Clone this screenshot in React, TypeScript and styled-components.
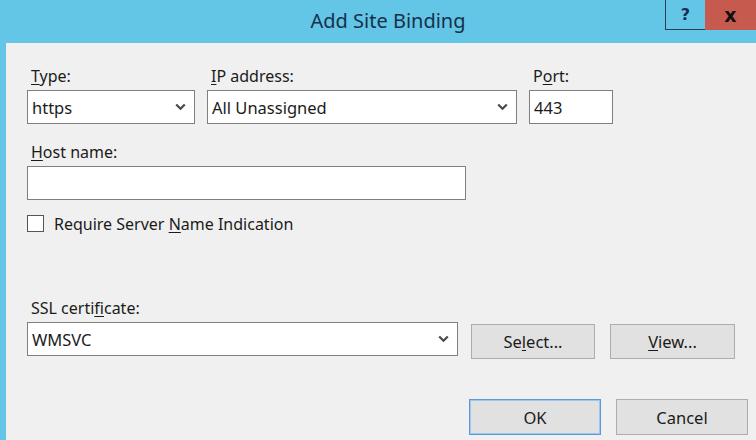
import React from 'react';
import styled, { createGlobalStyle } from 'styled-components';

const GlobalStyle = createGlobalStyle`
  html, body {
    margin: 0;
    padding: 0;
    background: #63c6e7;
  }
  * {
    box-sizing: border-box;
  }
`;

const Window = styled.div`
  display: flex;
  flex-direction: column;
  width: 756px;
  height: 440px;
  overflow: hidden;
  background: #63c6e7;
  font-family: 'Noto Sans', 'Open Sans', sans-serif;
  color: #1b1b1b;
`;

const TitleBar = styled.div`
  display: grid;
  grid-template-columns: 91px 1fr 91px;
  height: 43px;
  flex-shrink: 0;
`;

const Title = styled.div`
  grid-column: 2;
  padding: 7px 0 0 20px;
  text-align: center;
  font-size: 20px;
  color: #17304a;
`;

const Controls = styled.div`
  display: flex;
  align-items: flex-start;
`;

const CaptionButton = styled.div<{ $close?: boolean }>`
  display: flex;
  align-items: center;
  justify-content: center;
  height: 30px;
  width: ${(p) => (p.$close ? '51px' : '40px')};
  background: ${(p) => (p.$close ? '#c75a4e' : '#63c6e7')};
  border-left: ${(p) => (p.$close ? 'none' : '1px solid #2d3e4e')};
  border-bottom: ${(p) => (p.$close ? 'none' : '1px solid #2d3e4e')};
  font-family: 'DejaVu Sans', sans-serif;
  font-weight: bold;
  font-size: ${(p) => (p.$close ? '19px' : '16px')};
  color: ${(p) => (p.$close ? '#111' : '#1a2d55')};
`;

const Body = styled.div`
  flex: 1;
  margin-left: 6px;
  background: #f0f0f0;
  padding: 23px 8px 0 21px;
  display: flex;
  flex-direction: column;
  font-size: 16px;
`;

const Row = styled.div<{ $gap?: number; $top?: number; $justify?: string }>`
  display: flex;
  align-items: flex-start;
  gap: ${(p) => p.$gap ?? 12}px;
  margin-top: ${(p) => p.$top ?? 0}px;
  justify-content: ${(p) => p.$justify ?? 'flex-start'};
`;

const Field = styled.div<{ $width: number; $top?: number }>`
  display: flex;
  flex-direction: column;
  width: ${(p) => p.$width}px;
  margin-top: ${(p) => p.$top ?? 0}px;
`;

const Label = styled.div`
  height: 20px;
  line-height: 20px;
  padding-left: 4px;
  margin-bottom: 4px;
  white-space: nowrap;
`;

const Key = styled.span`
  text-decoration: underline;
  text-underline-offset: 2px;
`;

const Box = styled.div`
  display: flex;
  align-items: center;
  height: 34px;
  background: #ffffff;
  border: 1px solid #7f7f7f;
  padding: 0 8px 0 4px;
  font-size: 16.5px;
`;

const BoxText = styled.span`
  flex: 1;
`;

const Chevron = () => (
  <svg width="11" height="8" viewBox="0 0 11 8">
    <polyline points="1.2,1.5 5.5,5.8 9.8,1.5" fill="none" stroke="#4a4a4a" strokeWidth="2.2" />
  </svg>
);

const CheckRow = styled.div`
  display: flex;
  align-items: center;
  gap: 10px;
  margin-top: 15px;
  height: 17px;
`;

const CheckBox = styled.div`
  width: 17px;
  height: 17px;
  background: #ffffff;
  border: 1px solid #555555;
`;

const Button = styled.div<{ $width: number; $height?: number; $default?: boolean }>`
  display: flex;
  align-items: center;
  justify-content: center;
  width: ${(p) => p.$width}px;
  height: ${(p) => p.$height ?? 35}px;
  background: #e1e1e1;
  border: 1px solid ${(p) => (p.$default ? '#5b9bd5' : '#adadad')};
  box-shadow: ${(p) => (p.$default ? 'inset 0 0 0 1px #9fc7ec' : 'none')};
  font-size: 16.5px;
`;

export default function App() {
  return (
    <Window>
      <GlobalStyle />
      <TitleBar>
        <Title>Add Site Binding</Title>
        <Controls>
          <CaptionButton>?</CaptionButton>
          <CaptionButton $close>x</CaptionButton>
        </Controls>
      </TitleBar>
      <Body>
        <Row $gap={12}>
          <Field $width={168}>
            <Label>
              <Key>T</Key>ype:
            </Label>
            <Box>
              <BoxText>https</BoxText>
              <Chevron />
            </Box>
          </Field>
          <Field $width={310}>
            <Label>
              <Key>I</Key>P address:
            </Label>
            <Box>
              <BoxText>All Unassigned</BoxText>
              <Chevron />
            </Box>
          </Field>
          <Field $width={84}>
            <Label>
              P<Key>o</Key>rt:
            </Label>
            <Box>
              <BoxText>443</BoxText>
            </Box>
          </Field>
        </Row>
        <Field $width={439} $top={18}>
          <Label>
            <Key>H</Key>ost name:
          </Label>
          <Box />
        </Field>
        <CheckRow>
          <CheckBox />
          <span>
            Require Server <Key>N</Key>ame Indication
          </span>
        </CheckRow>
        <Row $gap={13} $top={66}>
          <Field $width={431}>
            <Label>
              SSL certi<Key>f</Key>icate:
            </Label>
            <Box>
              <BoxText>WMSVC</BoxText>
              <Chevron />
            </Box>
          </Field>
          <Row $gap={15} $top={26}>
            <Button $width={124}>
              Se<Key>l</Key>ect...
            </Button>
            <Button $width={125}>
              <Key>V</Key>iew...
            </Button>
          </Row>
        </Row>
        <Row $gap={15} $top={40} $justify="flex-end">
          <Button $width={132} $height={36} $default>
            OK
          </Button>
          <Button $width={132} $height={36}>
            Cancel
          </Button>
        </Row>
      </Body>
    </Window>
  );
}
